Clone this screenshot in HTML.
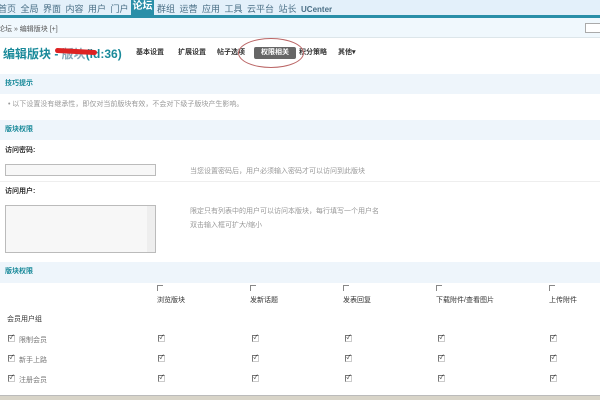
<!DOCTYPE html>
<html><head><meta charset="utf-8"><style>
*{margin:0;padding:0;box-sizing:border-box}
body{width:600px;height:400px;overflow:hidden;background:#fff;font-family:"Liberation Sans","Noto Sans CJK SC",sans-serif;font-size:7px;color:#333;position:relative}
.a{position:absolute;white-space:nowrap}
.nav{left:0;top:0;width:600px;height:15px;background:#e3f0fa}
.navline{left:0;top:15px;width:600px;height:3px;background:#2a8fa8}
.bc{left:0;top:18px;width:600px;height:20px;background:#f0f8fd;border-bottom:1px solid #dde6ea}
.hd{left:0;width:600px;height:20px;background:#eef5fb;color:#1a8a9a;font-weight:bold;font-size:7px;padding-left:5px;line-height:20px}
.g{color:#999;font-size:7px}
.t{top:48px;font-size:7px;font-weight:bold;color:#333;line-height:10px}
.cb{width:7px;height:7px;border:1px solid #777;border-right-color:#ccc;border-bottom-color:#ccc;font-size:6px;line-height:5px;text-align:center;color:#222;background:#fff}
.ch{width:6px;height:6px;border-left:1px solid #888;border-top:1px solid #888}
</style></head><body>
<div class="a nav"></div>
<div class="a" style="left:-2px;top:2px;font-size:9px;color:#4a6f86;word-spacing:2px">首页 全局 界面 内容 用户 门户</div>
<div class="a" style="left:131px;top:0;width:23px;height:16px;background:#2a8fa8;color:#fff;font-size:10px;font-weight:bold;text-align:center;line-height:14px">论坛</div>
<div class="a" style="left:157px;top:2px;font-size:9px;color:#4a6f86;word-spacing:2px">群组 运营 应用 工具 云平台 站长 <span style="font-size:8px;font-weight:bold">UCenter</span></div>
<div class="a navline"></div>
<div class="a bc"></div>
<div class="a" style="left:-2px;top:24px;font-size:7px;color:#555">论坛 » 编辑版块 [+]</div>
<div class="a" style="left:585px;top:23px;width:20px;height:10px;border:1px solid #aaa;background:#fff"></div>
<div class="a" style="left:3px;top:45px;font-size:12px;color:#1a8a9a;font-weight:bold">编辑版块 - <span style="color:#8ab">版块</span>(id:36)</div>
<div class="a" style="left:55px;top:49px;width:42px;height:5px;background:#d22;border-radius:3px;transform:rotate(3deg)"></div>
<div class="a t" style="left:136px">基本设置</div>
<div class="a t" style="left:178px">扩展设置</div>
<div class="a t" style="left:217px">帖子选项</div>
<div class="a" style="left:254px;top:47px;width:42px;height:12px;background:#666;border-radius:2px;color:#fff;font-size:7px;font-weight:bold;text-align:center;line-height:12px">权限相关</div>
<div class="a t" style="left:299px">积分策略</div>
<div class="a t" style="left:338px">其他▾</div>
<div class="a" style="left:238px;top:38px;width:66px;height:30px;border:1px solid #b66;border-radius:50%"></div>
<div class="a hd" style="top:74px">技巧提示</div>
<div class="a g" style="left:8px;top:99px">•  以下设置没有继承性，即仅对当前版块有效，不会对下级子版块产生影响。</div>
<div class="a hd" style="top:120px">版块权限</div>
<div class="a" style="left:5px;top:145px;font-weight:bold">访问密码:</div>
<div class="a" style="left:5px;top:164px;width:151px;height:12px;border:1px solid #bbb;background:#f7f7f7"></div>
<div class="a g" style="left:190px;top:166px">当您设置密码后，用户必须输入密码才可以访问到此版块</div>
<div class="a" style="left:0;top:181px;width:600px;height:1px;background:#eee"></div>
<div class="a" style="left:5px;top:186px;font-weight:bold">访问用户:</div>
<div class="a" style="left:5px;top:205px;width:151px;height:48px;border:1px solid #bbb;background:#f7f7f7"></div>
<div class="a" style="left:147px;top:206px;width:8px;height:46px;background:#eee"></div>
<div class="a g" style="left:190px;top:206px">限定只有列表中的用户可以访问本版块，每行填写一个用户名</div>
<div class="a g" style="left:190px;top:220px">双击输入框可扩大/缩小</div>
<div class="a hd" style="top:262px;height:21px">版块权限</div>
<div class="a ch" style="left:157px;top:285px"></div>
<div class="a ch" style="left:250px;top:285px"></div>
<div class="a ch" style="left:343px;top:285px"></div>
<div class="a ch" style="left:436px;top:285px"></div>
<div class="a ch" style="left:549px;top:285px"></div>
<div class="a" style="left:157px;top:295px">浏览版块</div>
<div class="a" style="left:250px;top:295px">发新话题</div>
<div class="a" style="left:343px;top:295px">发表回复</div>
<div class="a" style="left:436px;top:295px">下载附件/查看图片</div>
<div class="a" style="left:549px;top:295px">上传附件</div>
<div class="a" style="left:7px;top:314px">会员用户组</div>
<div class="a cb" style="left:8px;top:335px">✓</div><div class="a g" style="left:19px;top:335px;color:#777">限制会员</div>
<div class="a cb" style="left:8px;top:355px">✓</div><div class="a g" style="left:19px;top:355px;color:#777">新手上路</div>
<div class="a cb" style="left:8px;top:375px">✓</div><div class="a g" style="left:19px;top:375px;color:#777">注册会员</div>
<div class="a cb" style="left:158px;top:335px">✓</div><div class="a cb" style="left:252px;top:335px">✓</div><div class="a cb" style="left:345px;top:335px">✓</div><div class="a cb" style="left:438px;top:335px">✓</div><div class="a cb" style="left:550px;top:335px">✓</div>
<div class="a cb" style="left:158px;top:355px">✓</div><div class="a cb" style="left:252px;top:355px">✓</div><div class="a cb" style="left:345px;top:355px">✓</div><div class="a cb" style="left:438px;top:355px">✓</div><div class="a cb" style="left:550px;top:355px">✓</div>
<div class="a cb" style="left:158px;top:375px">✓</div><div class="a cb" style="left:252px;top:375px">✓</div><div class="a cb" style="left:345px;top:375px">✓</div><div class="a cb" style="left:438px;top:375px">✓</div><div class="a cb" style="left:550px;top:375px">✓</div>
<div class="a" style="left:0;top:395px;width:600px;height:5px;background:#d8d4c8;border-top:1px solid #bbb"></div>
</body></html>
